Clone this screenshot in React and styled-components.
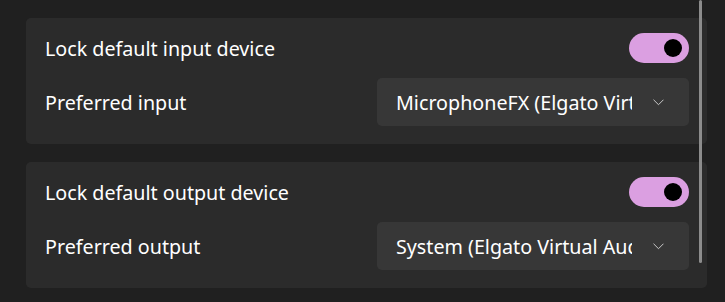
import styled, { createGlobalStyle } from "styled-components";

const GlobalStyle = createGlobalStyle`
  html, body {
    margin: 0;
    padding: 0;
    background: #202020;
  }
  body {
    font-family: "Noto Sans", "Open Sans", sans-serif;
    color: #ffffff;
  }
`;

const Page = styled.div`
  position: relative;
  width: 725px;
  height: 302px;
  overflow: hidden;
  background: #202020;
  padding: 18px 18px 0 26px;
  box-sizing: border-box;
  display: flex;
  flex-direction: column;
  gap: 18px;
`;

const Card = styled.div`
  background: #2b2b2b;
  border-radius: 5px;
  padding: 15px 18px 18px 19px;
  display: flex;
  flex-direction: column;
  gap: 15px;
`;

const Row = styled.div`
  display: flex;
  align-items: center;
  justify-content: space-between;
  height: ${(p) => p.$h}px;
`;

const Label = styled.span`
  font-size: 19.7px;
  color: #ffffff;
`;

const Toggle = styled.div`
  width: 60px;
  height: 30px;
  border-radius: 15px;
  background: #db9fe1;
  display: flex;
  align-items: center;
  justify-content: flex-end;
  padding-right: 7px;
  box-sizing: border-box;
`;

const Knob = styled.div`
  width: 18px;
  height: 18px;
  border-radius: 50%;
  background: #000;
`;

const Select = styled.div`
  width: 312px;
  height: 48px;
  border-radius: 5px;
  background: #373737;
  display: flex;
  align-items: center;
  padding: 0 25px 0 19px;
  box-sizing: border-box;
`;

const SelectText = styled.span`
  font-size: 19.7px;
  color: #ffffff;
  width: 236px;
  overflow: hidden;
  white-space: nowrap;
`;

const Chevron = styled.svg`
  margin-left: auto;
  width: 11px;
  height: 7px;
`;

const Scrollbar = styled.div`
  position: absolute;
  left: 699px;
  top: 0;
  width: 3px;
  height: 263px;
  border-radius: 2px;
  background: #8c8c8c;
`;

const Setting = ({ lockLabel, prefLabel, value }) => (
  <Card>
    <Row $h={30}>
      <Label>{lockLabel}</Label>
      <Toggle>
        <Knob />
      </Toggle>
    </Row>
    <Row $h={48}>
      <Label>{prefLabel}</Label>
      <Select>
        <SelectText>{value}</SelectText>
        <Chevron viewBox="0 0 11 7">
          <path d="M0.8 1 L5.5 5.7 L10.2 1" fill="none" stroke="#c8c8c8" strokeWidth="1" strokeLinecap="round" strokeLinejoin="round" />
        </Chevron>
      </Select>
    </Row>
  </Card>
);

export default function App() {
  return (
    <Page>
      <GlobalStyle />
      <Setting
        lockLabel="Lock default input device"
        prefLabel="Preferred input"
        value="MicrophoneFX (Elgato Virtual Audio)"
      />
      <Setting
        lockLabel="Lock default output device"
        prefLabel="Preferred output"
        value="System (Elgato Virtual Audio)"
      />
      <Scrollbar />
    </Page>
  );
}
